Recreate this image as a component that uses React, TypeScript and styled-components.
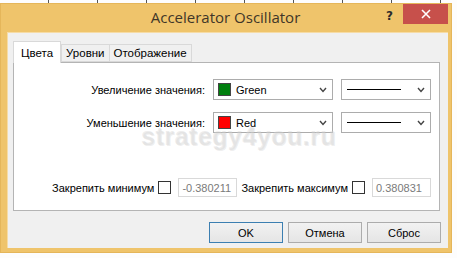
import styled, { createGlobalStyle } from 'styled-components';

const GlobalStyle = createGlobalStyle`
  html, body {
    margin: 0;
    padding: 0;
    background: #ffffff;
  }
  body {
    font-family: 'Liberation Sans', Arial, sans-serif;
    font-size: 11px;
    color: #000;
  }
`;

const Page = styled.div`
  width: 457px;
  height: 258px;
  padding-top: 3px;
  box-sizing: border-box;
  background-color: #fdfdfd;
  background-image: repeating-linear-gradient(
    90deg,
    transparent 0 48px,
    #555 48px 49px
  );
  background-size: 100% 3px;
  background-repeat: no-repeat;
  position: relative;
  overflow: hidden;
`;

const Window = styled.div`
  width: 452px;
  height: 250px;
  background: #efc46b;
  display: flex;
  flex-direction: column;
  padding: 0 4px 5px 7px;
  box-sizing: border-box;
  box-shadow: inset 0 0 0 1px #e5b65a;
`;

const TitleBar = styled.div`
  height: 29px;
  display: grid;
  grid-template-columns: 1fr auto 1fr;
  align-items: start;
`;

const Title = styled.div`
  font-family: 'Open Sans', 'Noto Sans', sans-serif;
  font-size: 15px;
  color: #3f3628;
  padding-top: 4px;
  margin-left: -4px;
`;

const Controls = styled.div`
  display: flex;
  justify-content: flex-end;
  align-items: start;
`;

const HelpBtn = styled.div`
  font-family: 'DejaVu Sans', sans-serif;
  font-weight: bold;
  font-size: 12px;
  color: #2b2b2b;
  padding-top: 6px;
  margin-right: 10px;
`;

const CloseBtn = styled.div`
  width: 45px;
  height: 20px;
  margin-top: 1px;
  background: #c7504b;
  display: flex;
  align-items: center;
  justify-content: center;
`;

const Client = styled.div`
  flex: 1;
  background: #f0f0f0;
  border: 1px solid #f6dca6;
  border-right: none;
  border-bottom: none;
  display: flex;
  flex-direction: column;
  padding: 8px 7px 0 5px;
  box-sizing: border-box;
`;

const TabStrip = styled.div`
  display: flex;
  align-items: flex-end;
  height: 21px;
  position: relative;
  z-index: 1;
`;

const Tab = styled.div<{ $active?: boolean }>`
  height: ${(p) => (p.$active ? 22 : 18)}px;
  margin-bottom: ${(p) => (p.$active ? -1 : 0)}px;
  padding: 0 ${(p) => (p.$active ? 7 : 4)}px;
  display: flex;
  align-items: center;
  background: ${(p) => (p.$active ? '#ffffff' : '#f0f0f0')};
  border: 1px solid #d9d9d9;
  border-bottom: ${(p) => (p.$active ? 'none' : '1px solid #d9d9d9')};
  margin-right: ${(p) => (p.$active ? 0 : -1)}px;
  box-sizing: border-box;
  font-size: 11.5px;
  color: #000;
`;

const Panel = styled.div`
  height: 149px;
  width: 427px;
  background: #ffffff;
  border: 1px solid #b4b4b4;
  box-sizing: border-box;
  display: flex;
  flex-direction: column;
  padding: 16px 8px 0 0;
  position: relative;
`;

const Row = styled.div`
  display: flex;
  justify-content: flex-end;
  align-items: center;
  height: 21px;
  margin-bottom: 12px;
`;

const Label = styled.span`
  font-size: 11px;
  margin-right: 8px;
  white-space: nowrap;
`;

const Combo = styled.div<{ $w: number; $gap?: number }>`
  width: ${(p) => p.$w}px;
  height: 21px;
  margin-left: ${(p) => p.$gap ?? 0}px;
  border: 1px solid #acacac;
  box-sizing: border-box;
  display: flex;
  align-items: center;
  padding: 0 5px 0 4px;
  background: #fff;
`;

const Swatch = styled.span<{ $color: string }>`
  width: 13px;
  height: 13px;
  background: ${(p) => p.$color};
  border: 1px solid #444;
  box-sizing: border-box;
  margin-right: 5px;
`;

const ComboText = styled.span`
  flex: 1;
  font-size: 11px;
`;

const LineSample = styled.span`
  flex: 1;
  height: 1px;
  background: #000;
  margin: 0 16px 0 1px;
`;

const BottomRow = styled.div`
  margin-top: auto;
  margin-bottom: 13px;
  display: flex;
  justify-content: flex-end;
  align-items: center;
`;

const FixLabel = styled.span`
  font-size: 11px;
  white-space: nowrap;
  margin-right: 4px;
`;

const Check = styled.span`
  width: 13px;
  height: 13px;
  border: 1px solid #333;
  box-sizing: border-box;
  background: #fff;
  margin-right: 7px;
`;

const NumInput = styled.div<{ $mr?: number }>`
  width: 59px;
  height: 19px;
  border: 1px solid #d9d9d9;
  box-sizing: border-box;
  display: flex;
  align-items: center;
  padding-left: 3px;
  font-size: 11px;
  color: #7a7a7a;
  margin-right: ${(p) => p.$mr ?? 0}px;
`;

const ButtonRow = styled.div`
  display: flex;
  justify-content: flex-end;
  gap: 5px;
  margin-top: 11px;
`;

const Button = styled.div<{ $default?: boolean }>`
  width: 74px;
  height: 21px;
  box-sizing: border-box;
  border: 1px solid ${(p) => (p.$default ? '#3c7fb1' : '#acacac')};
  background: linear-gradient(#f2f2f2, #e5e5e5);
  display: flex;
  align-items: center;
  justify-content: center;
  font-size: 11px;
`;

const Watermark = styled.div`
  position: absolute;
  left: 127px;
  top: 59px;
  font-family: 'Liberation Sans', Arial, sans-serif;
  font-size: 25px;
  font-weight: bold;
  color: rgba(215, 215, 215, 0.45);
  text-shadow: 1px 1px 0 rgba(170, 170, 170, 0.2);
  pointer-events: none;
  letter-spacing: 0.5px;
`;

function Chevron() {
  return (
    <svg width="8" height="6" viewBox="0 0 8 6">
      <path d="M1 1 L4 4.5 L7 1" fill="none" stroke="#444" strokeWidth="1.4" />
    </svg>
  );
}

function CloseIcon() {
  return (
    <svg width="10" height="10" viewBox="0 0 10 10">
      <path d="M1 1 L9 9 M9 1 L1 9" stroke="#fff" strokeWidth="1.6" />
    </svg>
  );
}

export default function App() {
  return (
    <Page>
      <GlobalStyle />
      <Window>
        <TitleBar>
          <div />
          <Title>Accelerator Oscillator</Title>
          <Controls>
            <HelpBtn>?</HelpBtn>
            <CloseBtn>
              <CloseIcon />
            </CloseBtn>
          </Controls>
        </TitleBar>
        <Client>
          <TabStrip>
            <Tab $active>Цвета</Tab>
            <Tab>Уровни</Tab>
            <Tab>Отображение</Tab>
          </TabStrip>
          <Panel>
            <Row>
              <Label>Увеличение значения:</Label>
              <Combo $w={120}>
                <Swatch $color="#007f0e" />
                <ComboText>Green</ComboText>
                <Chevron />
              </Combo>
              <Combo $w={90} $gap={8}>
                <LineSample />
                <Chevron />
              </Combo>
            </Row>
            <Row>
              <Label>Уменьшение значения:</Label>
              <Combo $w={120}>
                <Swatch $color="#ff0000" />
                <ComboText>Red</ComboText>
                <Chevron />
              </Combo>
              <Combo $w={90} $gap={8}>
                <LineSample />
                <Chevron />
              </Combo>
            </Row>
            <BottomRow>
              <FixLabel>Закрепить минимум</FixLabel>
              <Check />
              <NumInput $mr={4}>-0.380211</NumInput>
              <FixLabel>Закрепить максимум</FixLabel>
              <Check />
              <NumInput>0.380831</NumInput>
            </BottomRow>
            <Watermark>strategy4you.ru</Watermark>
          </Panel>
          <ButtonRow>
            <Button $default>OK</Button>
            <Button>Отмена</Button>
            <Button>Сброс</Button>
          </ButtonRow>
        </Client>
      </Window>
    </Page>
  );
}
